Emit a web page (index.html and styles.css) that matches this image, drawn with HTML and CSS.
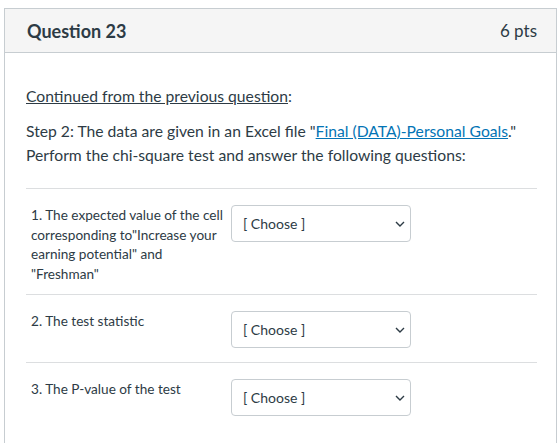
FILE: index.html
```html
<!DOCTYPE html>
<html lang="en">
<head>
  <meta charset="UTF-8">
  <meta name="viewport" content="width=device-width, initial-scale=1.0">
  <title>Question 23</title>
  <link rel="stylesheet" href="styles.css">
</head>
<body>
  <div class="question">
    <div class="header">
      <span class="question-name">Question 23</span>
      <span class="points">6 pts</span>
    </div>

    <div class="text">
      <p class="intro"><u>Continued from the previous question</u>:</p>
      <p class="step">Step 2: The data are given in an Excel file "<a href="#">Final (DATA)-Personal Goals</a>."
        Perform the chi-square test and answer the following questions:</p>

      <div class="answers">
        <div class="answer">
          <div class="answer-label">1. The expected value of the cell corresponding to"Increase your earning potential" and "Freshman"</div>
          <div class="select-wrap">
            <select class="choose"><option>[ Choose ]</option></select>
            <svg class="chevron" width="10" height="6" viewBox="0 0 10 6"><path d="M1 1l4 4 4-4" fill="none" stroke="#2d3b45" stroke-width="1.4"/></svg>
          </div>
        </div>
        <div class="answer">
          <div class="answer-label">2. The test statistic</div>
          <div class="select-wrap">
            <select class="choose"><option>[ Choose ]</option></select>
            <svg class="chevron" width="10" height="6" viewBox="0 0 10 6"><path d="M1 1l4 4 4-4" fill="none" stroke="#2d3b45" stroke-width="1.4"/></svg>
          </div>
        </div>
        <div class="answer">
          <div class="answer-label">3. The P-value of the test</div>
          <div class="select-wrap">
            <select class="choose"><option>[ Choose ]</option></select>
            <svg class="chevron" width="10" height="6" viewBox="0 0 10 6"><path d="M1 1l4 4 4-4" fill="none" stroke="#2d3b45" stroke-width="1.4"/></svg>
          </div>
        </div>
      </div>
    </div>
  </div>
</body>
</html>
```

FILE: styles.css
```css
body {
  font-family: Lato, "Open Sans", sans-serif;
  color: #2d3b45;
  margin: 0;
  background: #fff;
}
.question {
  margin: 8px 3px 0 4px;
  border: 1px solid #c7cdd1;
  border-bottom: none;
  min-height: 440px;
}
.header {
  height: 43px;
  display: flex;
  justify-content: space-between;
  align-items: center;
  padding: 0 19px 0 22px;
  background-color: #f5f5f5;
  border-bottom: 1px solid #c7cdd1;
}
.question-name {
  font-size: 18px;
  font-weight: bold;
}
.points {
  font-size: 17px;
}
.text {
  padding: 0 19px 0 21px;
  font-size: 15.7px;
  line-height: 24px;
}
.intro {
  margin: 31px 0 11px;
}
.step {
  margin: 0 0 21px;
}
.text a {
  color: #0374b5;
}
.answer {
  display: flex;
  gap: 5px;
  align-items: flex-start;
  padding: 16px 0 10px 5px;
  border-top: 1px solid #dcdee0;
  font-size: 13.6px;
  line-height: 19.5px;
}
.answer-label {
  width: 195px;
  padding-top: 1px;
}
.select-wrap {
  position: relative;
  margin-bottom: 4px;
}
.choose {
  display: block;
  width: 180px;
  height: 37px;
  padding: 0 24px 0 11px;
  font-family: Lato, sans-serif;
  font-size: 14px;
  color: #2d3b45;
  background: #fff;
  border: 1px solid #c7cdd1;
  border-radius: 4px;
  -webkit-appearance: none;
  appearance: none;
}
.chevron {
  position: absolute;
  right: 6px;
  top: 16px;
  pointer-events: none;
}
```
